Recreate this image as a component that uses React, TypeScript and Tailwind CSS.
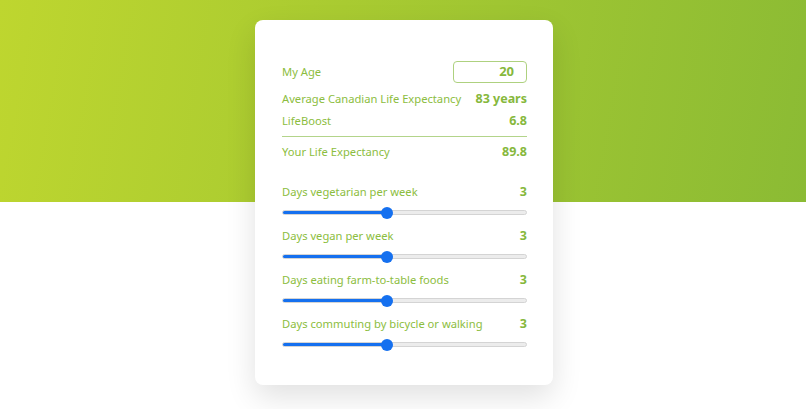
const sliders = [
  { label: "Days vegetarian per week", value: 3 },
  { label: "Days vegan per week", value: 3 },
  { label: "Days eating farm-to-table foods", value: 3 },
  { label: "Days commuting by bicycle or walking", value: 3 },
]

function Slider({ value, max }: { value: number; max: number }) {
  const pct = (value / max) * 100
  return (
    <div className="relative h-[5px] w-full rounded-full border border-[#d4d4d4] bg-[#ececec]">
      <div className="h-full rounded-full bg-[#1570ef]" style={{ width: `${pct}%` }} />
      <div
        className="absolute top-1/2 h-[12px] w-[12px] -translate-x-1/2 -translate-y-1/2 rounded-full bg-[#1570ef]"
        style={{ left: `${pct}%` }}
      />
    </div>
  )
}

export default function App() {
  return (
    <div
      className="flex min-h-[409px] w-full justify-center bg-white bg-[linear-gradient(100deg,#bed62f,#8bbb34)] bg-[length:100%_202px] bg-no-repeat pl-[2px] pt-[20px] text-[#8cbd40]"
      style={{ fontFamily: '"Noto Sans", sans-serif' }}
    >
      <div className="h-[365px] w-[298px] rounded-lg bg-white pl-[27px] pr-[26px] pt-[41px] shadow-[0_12px_30px_rgba(0,0,0,0.12)]">
        <div className="flex h-[22px] items-center justify-between">
          <span className="text-[11.2px]">{"My Age"}</span>
          <div className="flex h-[22px] w-[74px] items-center justify-end rounded-[4px] border border-[#aed17f] pr-[12px] text-[13px] font-bold text-[#86b83c]">
            {"20"}
          </div>
        </div>
        <div className="mt-[8px] flex h-[16px] items-center justify-between">
          <span className="text-[11.2px]">{"Average Canadian Life Expectancy"}</span>
          <span className="text-[12.5px] font-bold text-[#86b83c]">{"83 years"}</span>
        </div>
        <div className="mt-[6px] flex h-[16px] items-center justify-between">
          <span className="text-[11.2px]">{"LifeBoost"}</span>
          <span className="text-[12.5px] font-bold text-[#86b83c]">{"6.8"}</span>
        </div>
        <div className="mt-[7px] h-px bg-[#b3d48a]" />
        <div className="mt-[7px] flex h-[16px] items-center justify-between">
          <span className="text-[11.2px]">{"Your Life Expectancy"}</span>
          <span className="text-[12.5px] font-bold text-[#86b83c]">{"89.8"}</span>
        </div>
        <div className="mt-[24px] flex flex-col gap-[13px]">
          {sliders.map((s) => (
            <div key={s.label}>
              <div className="flex h-[16px] items-center justify-between">
                <span className="text-[11.2px]">{s.label}</span>
                <span className="text-[12.5px] font-bold text-[#86b83c]">{s.value}</span>
              </div>
              <div className="mt-[10px]">
                <Slider value={s.value} max={7} />
              </div>
            </div>
          ))}
        </div>
      </div>
    </div>
  )
}
